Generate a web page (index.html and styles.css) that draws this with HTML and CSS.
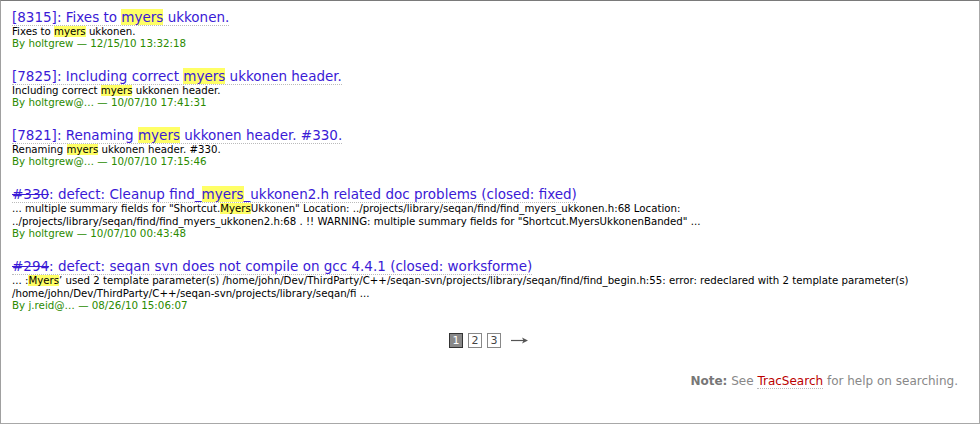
FILE: index.html
```html
<!DOCTYPE html>
<html>
<head>
<meta charset="utf-8">
<link rel="stylesheet" href="styles.css">
</head>
<body>
<div class="frame">
  <dl class="results">
    <dt><a class="title" href="#">[8315]: Fixes to <span class="hl">myers</span> ukkonen.</a></dt>
    <dd class="excerpt">Fixes to <span class="hl">myers</span> ukkonen.</dd>
    <dd class="meta"><span class="author">By holtgrew</span> — <span class="date">12/15/10 13:32:18</span></dd>

    <dt><a class="title" href="#">[7825]: Including correct <span class="hl">myers</span> ukkonen header.</a></dt>
    <dd class="excerpt">Including correct <span class="hl">myers</span> ukkonen header.</dd>
    <dd class="meta"><span class="author">By holtgrew@…</span> — <span class="date">10/07/10 17:41:31</span></dd>

    <dt><a class="title" href="#">[7821]: Renaming <span class="hl">myers</span> ukkonen header. #330.</a></dt>
    <dd class="excerpt">Renaming <span class="hl">myers</span> ukkonen header. #330.</dd>
    <dd class="meta"><span class="author">By holtgrew@…</span> — <span class="date">10/07/10 17:15:46</span></dd>

    <dt><a class="title" href="#"><span class="closed">#330</span>: defect: Cleanup find_<span class="hl">myers</span>_ukkonen2.h related doc problems (closed: fixed)</a></dt>
    <dd class="excerpt">... multiple summary fields for "Shortcut.<span class="hl">Myers</span>Ukkonen" Location: ../projects/library/seqan/find/find_myers_ukkonen.h:68 Location:<br>../projects/library/seqan/find/find_myers_ukkonen2.h:68 . !! WARNING: multiple summary fields for "Shortcut.MyersUkkonenBanded" ...</dd>
    <dd class="meta"><span class="author">By holtgrew</span> — <span class="date">10/07/10 00:43:48</span></dd>

    <dt><a class="title" href="#"><span class="closed">#294</span>: defect: seqan svn does not compile on gcc 4.4.1 (closed: worksforme)</a></dt>
    <dd class="excerpt">... :<span class="hl">Myers</span>’ used 2 template parameter(s) /home/john/Dev/ThirdParty/C++/seqan-svn/projects/library/seqan/find/find_begin.h:55: error: redeclared with 2 template parameter(s)<br>/home/john/Dev/ThirdParty/C++/seqan-svn/projects/library/seqan/fi ...</dd>
    <dd class="meta"><span class="author">By j.reid@…</span> — <span class="date">08/26/10 15:06:07</span></dd>
  </dl>

  <div class="paging">
    <span class="page current">1</span>
    <a class="page" href="#">2</a>
    <a class="page" href="#">3</a>
    <a class="next" href="#" aria-label="next page"><svg width="18" height="9" viewBox="0 0 18 9"><line x1="0" y1="4.5" x2="14" y2="4.5" stroke="#555" stroke-width="1.2"/><path d="M11 1.5 L17 4.5 L11 7.5 L12.5 4.5 Z" fill="#555"/></svg></a>
  </div>

  <p class="note"><strong>Note:</strong> See <a class="wiki" href="#">TracSearch</a> for help on searching.</p>
</div>
</body>
</html>
```

FILE: styles.css
```css
html, body {
  margin: 0;
  padding: 0;
  background: #fff;
}
body {
  font-family: "DejaVu Sans", Verdana, sans-serif;
}
.frame {
  box-sizing: border-box;
  width: 980px;
  height: 424px;
  border-top: 1px solid #7a7a7a;
  border-left: 1px solid #a0a0a0;
  border-right: 1px solid #a8a8a8;
  border-bottom: 1px solid #a8a8a8;
  padding: 8px 21px 0 11px;
}
.results {
  margin: 0;
}
.results dt {
  font-size: 13.5px;
  line-height: 16px;
  margin: 0;
}
.title {
  color: #3a1ad6;
  text-decoration: none;
  border-bottom: 1px dotted #bbb;
}
.closed {
  text-decoration: line-through;
}
.hl {
  background: #ffff66;
}
.results dd {
  margin: 0;
  font-size: 10.2px;
  color: #000;
}
.results dd.excerpt {
  line-height: 13px;
  white-space: nowrap;
}
.results dd.meta {
  color: #2a8a00;
  font-size: 10.3px;
  line-height: 11px;
  margin-bottom: 19px;
}
.paging {
  display: flex;
  justify-content: center;
  align-items: center;
  gap: 5px;
  margin-top: 22px;
  font-size: 11px;
  padding-left: 8px;
}
.page {
  box-sizing: border-box;
  width: 14px;
  height: 15px;
  border: 1px solid #888;
  color: #444;
  text-decoration: none;
  display: flex;
  align-items: center;
  justify-content: center;
}
.page.current {
  background: #888;
  color: #fff;
  border-color: #333;
}
.next {
  display: flex;
  align-items: center;
  margin-left: 5px;
}
.note {
  margin: 26px 0 0;
  text-align: right;
  color: #888;
  font-size: 12px;
}
.note strong {
  color: #777;
}
.wiki {
  color: #b00;
  text-decoration: none;
  border-bottom: 1px dotted #bbb;
}
```
